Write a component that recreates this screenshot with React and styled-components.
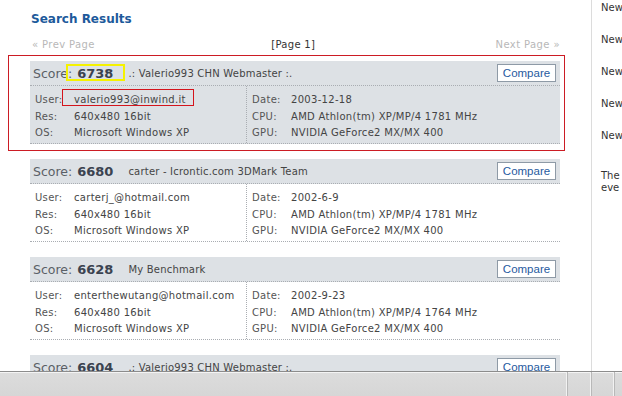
import React from "react";
import styled, { createGlobalStyle } from "styled-components";

const results = [
  {
    score: "6738",
    name: ".: Valerio993 CHN Webmaster :.",
    user: "valerio993@inwind.it",
    res: "640x480 16bit",
    os: "Microsoft Windows XP",
    date: "2003-12-18",
    cpu: "AMD Athlon(tm) XP/MP/4 1781 MHz",
    gpu: "NVIDIA GeForce2 MX/MX 400",
    selected: true,
  },
  {
    score: "6680",
    name: "carter - Icrontic.com 3DMark Team",
    user: "carterj_@hotmail.com",
    res: "640x480 16bit",
    os: "Microsoft Windows XP",
    date: "2002-6-9",
    cpu: "AMD Athlon(tm) XP/MP/4 1781 MHz",
    gpu: "NVIDIA GeForce2 MX/MX 400",
  },
  {
    score: "6628",
    name: "My Benchmark",
    user: "enterthewutang@hotmail.com",
    res: "640x480 16bit",
    os: "Microsoft Windows XP",
    date: "2002-9-23",
    cpu: "AMD Athlon(tm) XP/MP/4 1764 MHz",
    gpu: "NVIDIA GeForce2 MX/MX 400",
  },
  {
    score: "6604",
    name: ".: Valerio993 CHN Webmaster :.",
    user: "valerio993@inwind.it",
    res: "640x480 16bit",
    os: "Microsoft Windows XP",
    date: "2003-12-18",
    cpu: "AMD Athlon(tm) XP/MP/4 1781 MHz",
    gpu: "NVIDIA GeForce2 MX/MX 400",
  },
];

const GlobalStyle = createGlobalStyle`
  html, body {
    margin: 0;
    padding: 0;
    background: #fff;
  }
  body {
    font-family: "DejaVu Sans", Verdana, sans-serif;
    font-size: 10px;
    color: #444;
  }
`;

const App = () => {
  return (
    <>
      <GlobalStyle />
      <StPage>
        <StMain>
          <StContent>
            <StTitle>Search Results</StTitle>
            <StPager>
              <StPageLink>« Prev Page</StPageLink>
              <StPageNum>[Page 1]</StPageNum>
              <StPageLink>Next Page »</StPageLink>
            </StPager>

            <StList>
              {results.map((r, i) => (
                <StCard key={i} $selected={r.selected}>
                  <StHeader>
                    <StScore>Score:</StScore>
                    <StNumber>{r.score}</StNumber>
                    <StName>{r.name}</StName>
                    <StCompare>Compare</StCompare>
                  </StHeader>
                  <StBody>
                    <StColumn $left>
                      <StLabel>User:</StLabel>
                      <StValue>{r.user}</StValue>
                      <StLabel>Res:</StLabel>
                      <StValue>{r.res}</StValue>
                      <StLabel>OS:</StLabel>
                      <StValue>{r.os}</StValue>
                    </StColumn>
                    <StColumn>
                      <StLabel>Date:</StLabel>
                      <StValue>{r.date}</StValue>
                      <StLabel>CPU:</StLabel>
                      <StValue>{r.cpu}</StValue>
                      <StLabel>GPU:</StLabel>
                      <StValue>{r.gpu}</StValue>
                    </StColumn>
                  </StBody>
                  {r.selected && (
                    <>
                      <StRedFrame />
                      <StYellowMark />
                      <StRedMark />
                    </>
                  )}
                </StCard>
              ))}
            </StList>
          </StContent>

          <StSidebar>
            <StNews>New</StNews>
            <StNews>New</StNews>
            <StNews>New</StNews>
            <StNews>New</StNews>
            <StNews>New</StNews>
            <StBlurb>
              The
              <br />
              eve
            </StBlurb>
          </StSidebar>
        </StMain>

        <StStatusBar>
          <StStatusMain />
          <StStatusCell $w={24} />
          <StStatusCell $w={23} />
          <StStatusCell $w={8} />
        </StStatusBar>
      </StPage>
    </>
  );
};

export default App;

const StPage = styled.div`
  display: flex;
  flex-direction: column;

  width: 622px;
  height: 396px;
  overflow: hidden;
`;

const StMain = styled.div`
  display: flex;
  flex: 1;
  min-height: 0;
  overflow: hidden;
`;

const StContent = styled.div`
  width: 591px;
  padding: 11px 0 0 30px;
  box-sizing: border-box;
`;

const StTitle = styled.h1`
  margin: 0 0 0 1px;
  height: 17px;

  font-size: 12px;
  line-height: 17px;
  font-weight: bold;
  color: #1d5a9b;
`;

const StPager = styled.div`
  display: flex;
  justify-content: space-between;
  align-items: center;

  width: 528px;
  height: 14px;
  margin: 9px 0 10px 2px;
`;

const StPageLink = styled.span`
  color: #b8b8b8;
  letter-spacing: 0.4px;
`;

const StPageNum = styled.span`
  color: #333;
  margin-right: 4px;
  letter-spacing: 0.3px;
`;

const StList = styled.div`
  display: flex;
  flex-direction: column;
  gap: 15px;
`;

const StCard = styled.div`
  position: relative;

  width: 530px;
  background-color: ${({ $selected }) => ($selected ? "#dde1e5" : "#fff")};
`;

const StHeader = styled.div`
  display: flex;
  align-items: center;

  height: 24px;
  padding: 0 4px 0 3px;
  background-color: #dde1e5;
  border-bottom: 1px dotted #a9adb2;
`;

const StScore = styled.span`
  font-size: 12.5px;
  color: #5a5f66;
`;

const StNumber = styled.span`
  margin-left: 5px;

  font-size: 13px;
  font-weight: bold;
  color: #3b4350;
`;

const StName = styled.span`
  flex: 1;
  margin-left: 15px;

  color: #444;
  letter-spacing: 0.2px;
`;

const StCompare = styled.button`
  height: 18px;
  width: 59px;
  padding: 0;
  background-color: #fff;

  border: 1px solid #8e9aa6;
  border-radius: 0;

  font-family: "Liberation Sans", Arial, sans-serif;
  font-size: 11.5px;
  color: #1f5aa0;
`;

const StBody = styled.div`
  display: flex;

  height: 57px;
  border-bottom: 1px dotted #a9adb2;
`;

const StColumn = styled.div`
  display: grid;
  grid-template-columns: 39px max-content;
  grid-auto-rows: 16.6px;
  align-content: start;

  min-width: ${({ $left }) => ($left ? "207px" : "0")};
  padding: 6px 4px 0 5px;
  border-right: ${({ $left }) => ($left ? "1px dotted #a9adb2" : "none")};

  line-height: 16.6px;
  white-space: nowrap;
  letter-spacing: 0.3px;
`;

const StLabel = styled.span`
  color: #555;
`;

const StValue = styled.span`
  color: #444;
`;

const StRedFrame = styled.div`
  position: absolute;
  left: -22px;
  top: -6px;
  width: 555px;
  height: 94px;
  border: 1px solid #cc1c24;
  pointer-events: none;
`;

const StYellowMark = styled.div`
  position: absolute;
  left: 36px;
  top: 3px;
  width: 55px;
  height: 13px;
  border: 2.5px solid #f5f200;
  pointer-events: none;
`;

const StRedMark = styled.div`
  position: absolute;
  left: 32px;
  top: 28px;
  width: 130px;
  height: 15px;
  border: 1px solid #d4141c;
  pointer-events: none;
`;

const StSidebar = styled.div`
  display: flex;
  flex-direction: column;

  flex: 1;
  padding: 1px 0 0 9px;
  border-left: 1px solid #dcdcdc;
  overflow: hidden;

  white-space: nowrap;
  color: #333;
`;

const StNews = styled.div`
  height: 32px;
  line-height: 14px;
`;

const StBlurb = styled.div`
  margin-top: 9px;
  line-height: 12px;
`;

const StStatusBar = styled.div`
  display: flex;

  height: 25px;
  box-sizing: border-box;
  border-top: 1px solid #8c8c8c;
  box-shadow: inset 0 1px 0 #f4f4f4;
  background: linear-gradient(#dcdcdc, #d6d6d6);
`;

const StStatusMain = styled.div`
  flex: 1;
  border-right: 1px solid #f2f2f2;
`;

const StStatusCell = styled.div`
  box-sizing: border-box;
  width: ${({ $w }) => $w}px;
  border-left: 1px solid #b8b8b8;
  border-right: 1px solid #f2f2f2;

  &:last-child {
    border-right: none;
  }
`;
